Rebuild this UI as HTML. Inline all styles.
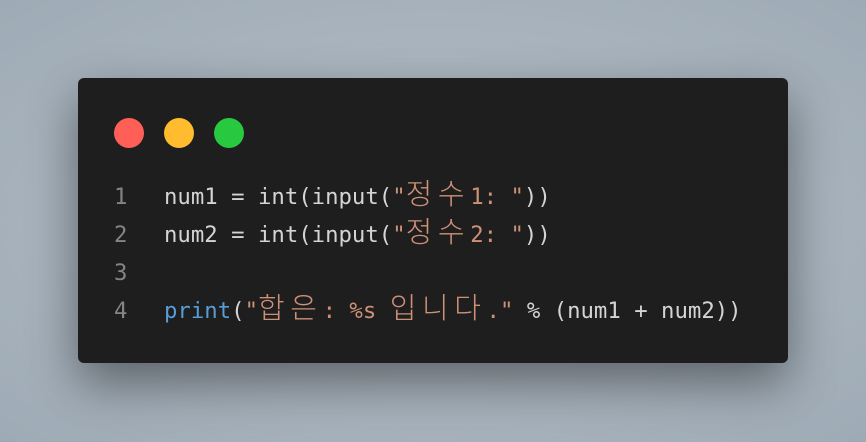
<!DOCTYPE html>
<html><head><meta charset="utf-8"><style>
html,body{margin:0;width:866px;height:442px;overflow:hidden}
body{background:radial-gradient(ellipse at 50% 50%,#b7c0c8 0%,#a8b3bd 60%,#9eaab5 100%)}
.card{position:absolute;left:78px;top:78px;width:710px;height:285px;background:#1e1e1e;border-radius:6px;box-shadow:0 20px 50px rgba(0,0,0,.45)}
.dot{position:absolute;top:40px;width:30px;height:30px;border-radius:50%}
.code{position:absolute;left:36px;top:100px;font-family:"DejaVu Sans Mono","Noto Sans CJK KR",monospace;font-size:22.3px;line-height:38px;color:#d4d4d4;white-space:pre}
.ln{display:inline-block;width:50px;color:#858585}
.s{color:#ce9178}.f{color:#569cd6}
.k{font-family:"Noto Sans CJK KR",sans-serif;font-size:29px;letter-spacing:5.6px;line-height:10px;font-weight:300}
</style></head><body>
<div class="card">
<div class="dot" style="left:36px;background:#ff5f57"></div>
<div class="dot" style="left:86px;background:#febc2e"></div>
<div class="dot" style="left:136px;background:#28c840"></div>
<div class="code"><span class="ln">1</span>num1 = int(input(<span class="s">"<span class="k">정수</span>1: "</span>))
<span class="ln">2</span>num2 = int(input(<span class="s">"<span class="k">정수</span>2: "</span>))
<span class="ln">3</span>
<span class="ln">4</span><span class="f">print</span>(<span class="s">"<span class="k">합은</span>: %s <span class="k">입니다</span>."</span> % (num1 + num2))</div>
</div>
</body></html>
